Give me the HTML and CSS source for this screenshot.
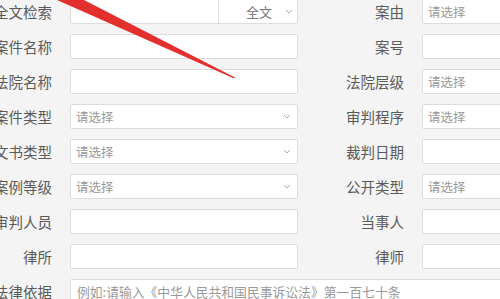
FILE: index.html
```html
<!DOCTYPE html>
<html lang="zh-CN">
<head>
    <meta charset="UTF-8">
    <meta name="viewport" content="width=device-width, initial-scale=1.0">
    <title>高级检索</title>
    <link rel="stylesheet" href="styles.css">
</head>
<body>
<div id="page">
    <div class="form">
        <span class="label">全文检索</span>
        <div class="field combo">
            <span class="combo-input"></span>
            <span class="combo-select">全文<svg class="arrow" viewBox="0 0 8 5"><path d="M1 1l3 3 3-3"/></svg></span>
        </div>
        <span class="label">案由</span>
        <div class="field"><span class="hint">请选择</span></div>

        <span class="label">案件名称</span>
        <div class="field"></div>
        <span class="label">案号</span>
        <div class="field"></div>

        <span class="label">法院名称</span>
        <div class="field"></div>
        <span class="label">法院层级</span>
        <div class="field"><span class="hint">请选择</span></div>

        <span class="label">案件类型</span>
        <div class="field select"><span class="hint">请选择</span><svg class="arrow" viewBox="0 0 8 5"><path d="M1 1l3 3 3-3"/></svg></div>
        <span class="label">审判程序</span>
        <div class="field"><span class="hint">请选择</span></div>

        <span class="label">文书类型</span>
        <div class="field select"><span class="hint">请选择</span><svg class="arrow" viewBox="0 0 8 5"><path d="M1 1l3 3 3-3"/></svg></div>
        <span class="label">裁判日期</span>
        <div class="field"></div>

        <span class="label">案例等级</span>
        <div class="field select"><span class="hint">请选择</span><svg class="arrow" viewBox="0 0 8 5"><path d="M1 1l3 3 3-3"/></svg></div>
        <span class="label">公开类型</span>
        <div class="field"><span class="hint">请选择</span></div>

        <span class="label">审判人员</span>
        <div class="field"></div>
        <span class="label">当事人</span>
        <div class="field"></div>

        <span class="label">律所</span>
        <div class="field"></div>
        <span class="label">律师</span>
        <div class="field"></div>

        <span class="label">法律依据</span>
        <div class="field wide"><span class="hint">例如:请输入《中华人民共和国民事诉讼法》第一百七十条</span></div>
    </div>
    <!-- 标注箭头 -->
    <svg class="mark" viewBox="0 0 500 299"><polygon points="57,0 84,0 236,78 233,78"/></svg>
</div>
</body>
</html>
```

FILE: styles.css
```css
html,
body {
    margin: 0;
    overflow: hidden;
}

body {
    background: #f4f4f4;
    font-family: "Noto Sans CJK SC", "Liberation Sans", sans-serif;
}

#page {
    position: relative;
    width: 500px;
    height: 299px;
    overflow: hidden;
}

.form {
    display: grid;
    grid-template-columns: 64px 228px 88px 228px;
    grid-auto-rows: 25px;
    column-gap: 18px;
    row-gap: 10px;
    margin: -1px 0 0 -12px;
}

.label {
    display: flex;
    align-items: center;
    justify-content: flex-end;
    font-size: 14.5px;
    color: #5a5a5a;
    white-space: nowrap;
}

.field {
    display: flex;
    align-items: center;
    box-sizing: border-box;
    padding: 0 5px;
    background: #fff;
    border: 1px solid #dcdcdc;
    border-radius: 2px;
    font-size: 12.5px;
    color: #999;
    white-space: nowrap;
}

.select {
    justify-content: space-between;
    padding-right: 6px;
}

.wide {
    grid-column: 2 / 5;
    padding-left: 6px;
    font-size: 12.8px;
}

.arrow {
    width: 8px;
    height: 5px;
    fill: none;
    stroke: #aaa;
    stroke-width: 1;
}

.combo {
    padding: 0;
}

.combo-input {
    flex: 1;
    height: 100%;
}

.combo-select {
    display: flex;
    align-items: center;
    gap: 13px;
    width: 79px;
    height: 100%;
    box-sizing: border-box;
    padding-left: 27px;
    border-left: 1px solid #e2e2e2;
    font-size: 13px;
    color: #777;
}

.mark {
    position: absolute;
    left: 0;
    top: 0;
    width: 500px;
    height: 299px;
    pointer-events: none;
}

.mark polygon {
    fill: #e3302e;
}
```
